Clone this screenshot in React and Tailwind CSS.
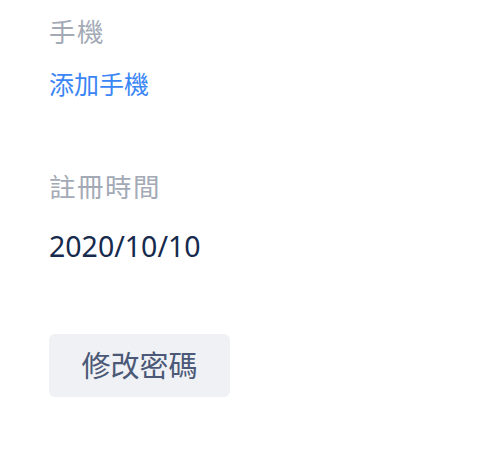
import React from 'react';

const font = { fontFamily: '"Noto Sans", "Noto Sans CJK TC", sans-serif' };

const App = () => {
  return (
    <div className="min-h-screen bg-white px-[49px]" style={font}>
      {/* Phone */}
      <div className="pt-[14px]">
        <div className="text-[26.5px] leading-[36px] tracking-[1.5px] text-[#a3aab6]">手機</div>
        <button className="mt-[16px] text-[25px] leading-[36px] text-[#3b86f5]">添加手機</button>
      </div>

      {/* Register time */}
      <div className="mt-[67px]">
        <div className="text-[26.5px] leading-[36px] tracking-[1.5px] text-[#a3aab6]">註冊時間</div>
        <div className="mt-[23px] text-[28.5px] leading-[36px] text-[#162a4d]">2020/10/10</div>
      </div>

      {/* Change password */}
      <button className="mt-[70px] w-[181px] h-[63px] rounded-[6px] bg-[#eff1f4] text-[29px] text-[#4b5877]">
        修改密碼
      </button>
    </div>
  );
};

export default App;
